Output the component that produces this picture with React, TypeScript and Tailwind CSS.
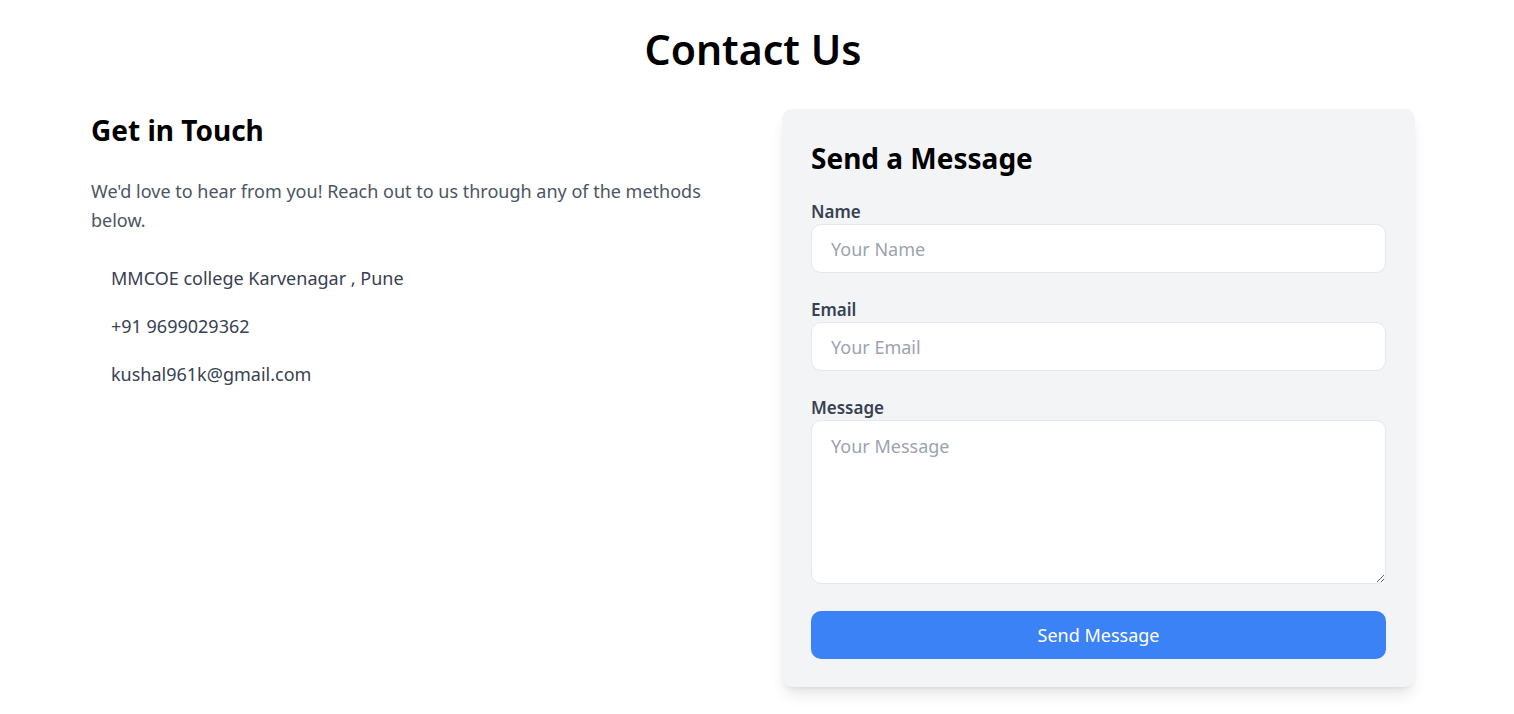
import React from "react";

export default function App() {
  return (
    <div
      className="min-h-screen bg-white"
      style={{ fontFamily: '"Noto Sans", "Open Sans", sans-serif' }}
    >
      <div className="ml-[91px] w-[1324px] pt-[20px]">
        <h1 className="mb-[31px] text-center text-[41px] leading-[58px] font-semibold text-black">
          Contact Us
        </h1>
        <div className="grid grid-cols-[633px_633px] gap-[58px]">
          <div className="pt-[1px]">
            <h2 className="mb-[27px] text-[28px] leading-[40px] font-bold text-black">
              Get in Touch
            </h2>
            <p className="mb-[29px] text-[18px] leading-[29px] text-[#4b5563]">
              We'd love to hear from you! Reach out to us through any of the methods below.
            </p>
            <div className="ml-[20px] flex flex-col gap-[20px] text-[18px] leading-[28px] text-[#374151]">
              <div>MMCOE college Karvenagar , Pune</div>
              <div>+91 9699029362</div>
              <div>kushal961k@gmail.com</div>
            </div>
          </div>
          <div className="rounded-[10px] bg-[#f3f4f6] px-[29px] pt-[29px] pb-[28px] shadow-lg">
            <h2 className="mb-[21px] text-[28px] leading-[40px] font-bold text-black">
              Send a Message
            </h2>
            <form className="flex flex-col" onSubmit={(e) => e.preventDefault()}>
              <label className="block text-[17px] leading-[25px] font-semibold text-[#374151]">
                Name
              </label>
              <input
                type="text"
                placeholder="Your Name"
                className="h-[49px] w-full rounded-[10px] border border-[#e5e7eb] bg-white px-[19px] text-[18px] text-[#111827] outline-none placeholder:text-[#9ca3af]"
              />
              <label className="mt-[24px] block text-[17px] leading-[25px] font-semibold text-[#374151]">
                Email
              </label>
              <input
                type="email"
                placeholder="Your Email"
                className="h-[49px] w-full rounded-[10px] border border-[#e5e7eb] bg-white px-[19px] text-[18px] text-[#111827] outline-none placeholder:text-[#9ca3af]"
              />
              <label className="mt-[24px] block text-[17px] leading-[25px] font-semibold text-[#374151]">
                Message
              </label>
              <textarea
                placeholder="Your Message"
                className="h-[164px] w-full rounded-[10px] border border-[#e5e7eb] bg-white px-[19px] py-[12px] text-[18px] leading-[27px] text-[#111827] outline-none placeholder:text-[#9ca3af]"
              />
              <button
                type="submit"
                className="mt-[27px] h-[48px] w-full rounded-[10px] bg-[#3b82f6] text-[18px] text-white"
              >
                Send Message
              </button>
            </form>
          </div>
        </div>
      </div>
    </div>
  );
}
